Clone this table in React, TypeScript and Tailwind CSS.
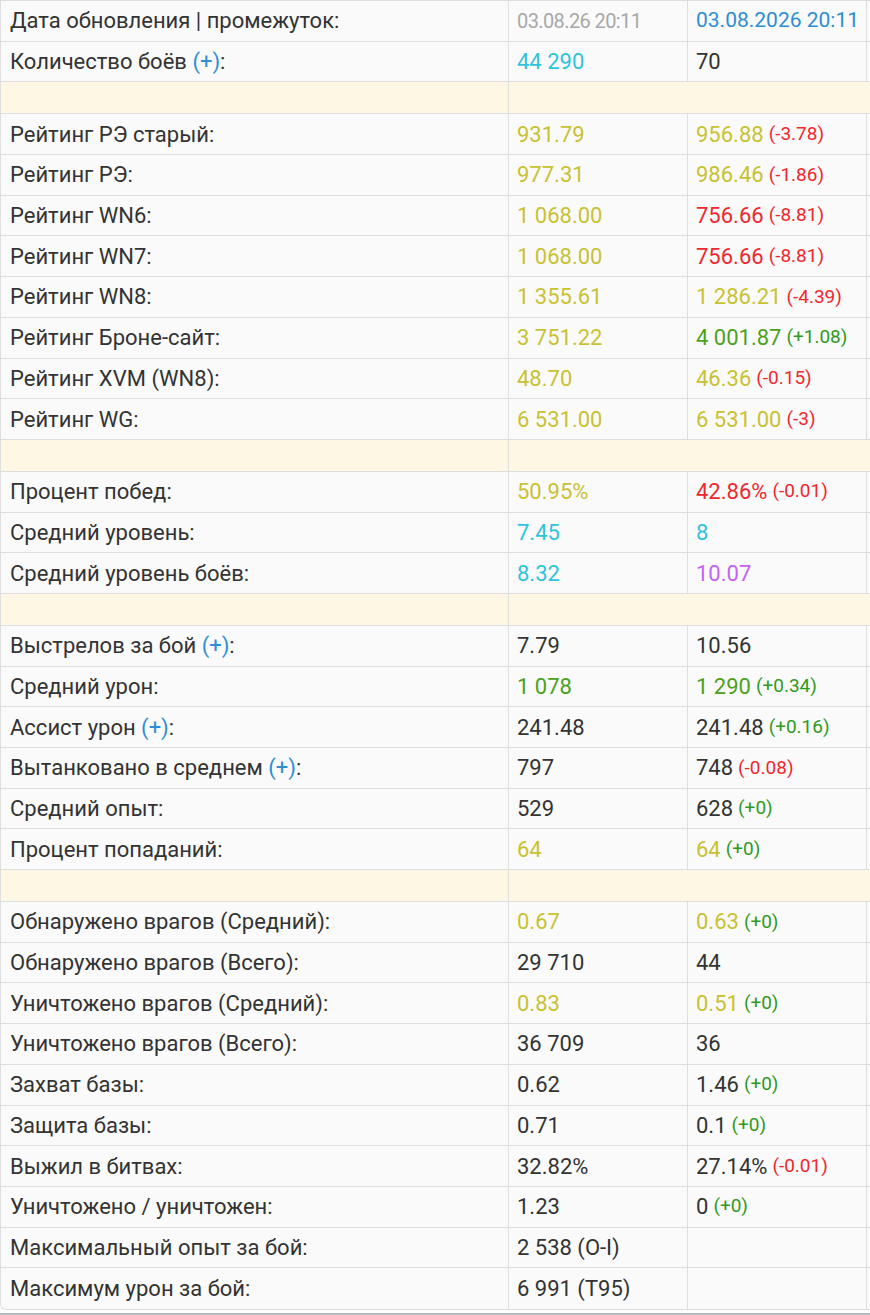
import React from "react";

type Val = { t: string; c?: string };
type Row =
  | { sep: true }
  | {
      sep?: false;
      label: string;
      plus?: boolean;
      a: Val;
      b?: Val;
      d?: Val;
    };

const Y = "#c8c232";
const CY = "#2ec3dc";
const R = "#f0282d";
const G = "#4ca11c";
const GS = "#2f9a1c";
const P = "#c462f5";

const rows: Row[] = [
  { label: "Количество боёв", plus: true, a: { t: "44 290", c: CY }, b: { t: "70" } },
  { sep: true },
  { label: "Рейтинг РЭ старый", a: { t: "931.79", c: Y }, b: { t: "956.88", c: Y }, d: { t: "(-3.78)", c: R } },
  { label: "Рейтинг РЭ", a: { t: "977.31", c: Y }, b: { t: "986.46", c: Y }, d: { t: "(-1.86)", c: R } },
  { label: "Рейтинг WN6", a: { t: "1 068.00", c: Y }, b: { t: "756.66", c: R }, d: { t: "(-8.81)", c: R } },
  { label: "Рейтинг WN7", a: { t: "1 068.00", c: Y }, b: { t: "756.66", c: R }, d: { t: "(-8.81)", c: R } },
  { label: "Рейтинг WN8", a: { t: "1 355.61", c: Y }, b: { t: "1 286.21", c: Y }, d: { t: "(-4.39)", c: R } },
  { label: "Рейтинг Броне-сайт", a: { t: "3 751.22", c: Y }, b: { t: "4 001.87", c: G }, d: { t: "(+1.08)", c: GS } },
  { label: "Рейтинг XVM (WN8)", a: { t: "48.70", c: Y }, b: { t: "46.36", c: Y }, d: { t: "(-0.15)", c: R } },
  { label: "Рейтинг WG", a: { t: "6 531.00", c: Y }, b: { t: "6 531.00", c: Y }, d: { t: "(-3)", c: R } },
  { sep: true },
  { label: "Процент побед", a: { t: "50.95%", c: Y }, b: { t: "42.86%", c: R }, d: { t: "(-0.01)", c: R } },
  { label: "Средний уровень", a: { t: "7.45", c: CY }, b: { t: "8", c: CY } },
  { label: "Средний уровень боёв", a: { t: "8.32", c: CY }, b: { t: "10.07", c: P } },
  { sep: true },
  { label: "Выстрелов за бой", plus: true, a: { t: "7.79" }, b: { t: "10.56" } },
  { label: "Средний урон", a: { t: "1 078", c: G }, b: { t: "1 290", c: G }, d: { t: "(+0.34)", c: GS } },
  { label: "Ассист урон", plus: true, a: { t: "241.48" }, b: { t: "241.48" }, d: { t: "(+0.16)", c: GS } },
  { label: "Вытанковано в среднем", plus: true, a: { t: "797" }, b: { t: "748" }, d: { t: "(-0.08)", c: R } },
  { label: "Средний опыт", a: { t: "529" }, b: { t: "628" }, d: { t: "(+0)", c: GS } },
  { label: "Процент попаданий", a: { t: "64", c: Y }, b: { t: "64", c: Y }, d: { t: "(+0)", c: GS } },
  { sep: true },
  { label: "Обнаружено врагов (Средний)", a: { t: "0.67", c: Y }, b: { t: "0.63", c: Y }, d: { t: "(+0)", c: GS } },
  { label: "Обнаружено врагов (Всего)", a: { t: "29 710" }, b: { t: "44" } },
  { label: "Уничтожено врагов (Средний)", a: { t: "0.83", c: Y }, b: { t: "0.51", c: Y }, d: { t: "(+0)", c: GS } },
  { label: "Уничтожено врагов (Всего)", a: { t: "36 709" }, b: { t: "36" } },
  { label: "Захват базы", a: { t: "0.62" }, b: { t: "1.46" }, d: { t: "(+0)", c: GS } },
  { label: "Защита базы", a: { t: "0.71" }, b: { t: "0.1" }, d: { t: "(+0)", c: GS } },
  { label: "Выжил в битвах", a: { t: "32.82%" }, b: { t: "27.14%" }, d: { t: "(-0.01)", c: R } },
  { label: "Уничтожено / уничтожен", a: { t: "1.23" }, b: { t: "0" }, d: { t: "(+0)", c: GS } },
  { label: "Максимальный опыт за бой", a: { t: "2 538 (O-I)" } },
  { label: "Максимум урон за бой", a: { t: "6 991 (T95)" } },
];

const grid = "grid grid-cols-[508px_179px_179px_200px]";

function Cell({ children, className = "" }: { children?: React.ReactNode; className?: string }) {
  return (
    <div className={`flex items-center border-r border-[#dedede] pl-[8px] whitespace-nowrap ${className}`}>
      {children}
    </div>
  );
}

export default function App() {
  return (
    <div
      className="w-[870px] h-[1315px] overflow-hidden bg-white text-[#333333]"
      style={{ fontFamily: "Roboto, 'Liberation Sans', sans-serif" }}
    >
      <div className="w-[1100px] border-l border-t border-b border-[#dedede] rounded-bl-[6px] bg-[#fafafa] overflow-hidden">
        <div className={`${grid} h-[40.7px] border-b border-[#dedede] text-[22px]`}>
          <Cell className="pl-[9px]">Дата обновления | промежуток:</Cell>
          <Cell className="text-[20px] tracking-[-0.6px] text-[#a8a8a8]">03.08.26 20:11</Cell>
          <Cell className="text-[21px] text-[#2d8ed6]">03.08.2026 20:11</Cell>
          <Cell />
        </div>
        {rows.map((r, i) =>
          r.sep ? (
            <div key={i} className={`${grid} h-[32px] border-b border-[#dedede] bg-[#fdf7e4]`}>
              <Cell />
              <div className="col-span-3" />
            </div>
          ) : (
            <div
              key={i}
              className={`${grid} h-[40.7px] ${i === rows.length - 1 ? "" : "border-b"} border-[#dedede] text-[22px]`}
            >
              <Cell className="pl-[9px]">
                {r.label}
                {r.plus && (
                  <>
                    &nbsp;<span className="text-[#2d8ed6]">(+)</span>
                  </>
                )}
                :
              </Cell>
              <Cell>
                <span style={{ color: r.a.c }}>{r.a.t}</span>
              </Cell>
              <Cell>
                {r.b && <span style={{ color: r.b.c }}>{r.b.t}</span>}
                {r.d && (
                  <span className="ml-[5px] text-[19px]" style={{ color: r.d.c }}>
                    {r.d.t}
                  </span>
                )}
              </Cell>
              <Cell />
            </div>
          )
        )}
      </div>
      <div className="mt-[3px] h-[4px] bg-[#b5b9c1]" />
    </div>
  );
}
